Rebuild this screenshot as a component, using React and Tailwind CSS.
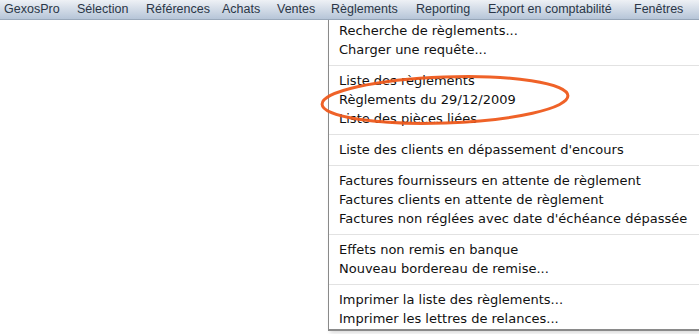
const menus = [
  { label: "GexosPro", w: "w-[73px]" },
  { label: "Sélection", w: "w-[69px]" },
  { label: "Références", w: "w-[76px]" },
  { label: "Achats", w: "w-[55px]" },
  { label: "Ventes", w: "w-[54px]" },
  { label: "Règlements", w: "w-[85px]" },
  { label: "Reporting", w: "w-[72px]" },
  { label: "Export en comptabilité", w: "w-[146px]" },
  { label: "Fenêtres", w: "w-[60px]" },
];

// groupes du menu Règlements
const groups = [
  ["Recherche de règlements...", "Charger une requête..."],
  ["Liste des règlements", "Règlements du 29/12/2009", "Liste des pièces liées"],
  ["Liste des clients en dépassement d'encours"],
  [
    "Factures fournisseurs en attente de règlement",
    "Factures clients en attente de règlement",
    "Factures non réglées avec date d'échéance dépassée",
  ],
  ["Effets non remis en banque", "Nouveau bordereau de remise..."],
  ["Imprimer la liste des règlements...", "Imprimer les lettres de relances..."],
];

export default function App() {
  return (
    <div
      className="relative w-[699px] h-[334px] bg-white overflow-hidden"
      style={{ fontFamily: '"DejaVu Sans", "Liberation Sans", sans-serif' }}
    >
      {/* Menu bar */}
      <div className="h-[20px] flex items-center pl-[4px] bg-gradient-to-b from-[#eef1f5] to-[#b6c5d8] border-b border-[#9aa9bb]">
        {menus.map((m) => (
          <div
            key={m.label}
            className={`${m.w} shrink-0 text-[12.5px] leading-none text-[#2a3647] whitespace-nowrap font-['Liberation_Sans',sans-serif]`}
          >
            {m.label}
          </div>
        ))}
      </div>

      {/* Dropdown */}
      <div className="absolute top-[20px] left-[328px] w-[371px] bg-white border-l border-b-2 border-[#8a8a8a] pt-px pb-[1px] shadow-[2px_2px_4px_rgba(0,0,0,0.15)]">
        {groups.map((g, i) => (
          <div key={i}>
            {i > 0 && <div className="mt-[6px] mb-[5px] h-px bg-[#e2e2e2]" />}
            {g.map((item) => (
              <div key={item} className="h-[19px] pl-[10px] text-[13px] leading-[19px] text-[#111] whitespace-nowrap">
                {item}
              </div>
            ))}
          </div>
        ))}
      </div>

      {/* Annotation */}
      <svg className="absolute left-0 top-0 pointer-events-none" width="699" height="334">
        <ellipse
          cx="445"
          cy="100"
          rx="123"
          ry="23"
          transform="rotate(-2 445 100)"
          fill="none"
          stroke="#ee5a1c"
          strokeWidth="3"
          opacity="0.95"
        />
      </svg>
    </div>
  );
}
